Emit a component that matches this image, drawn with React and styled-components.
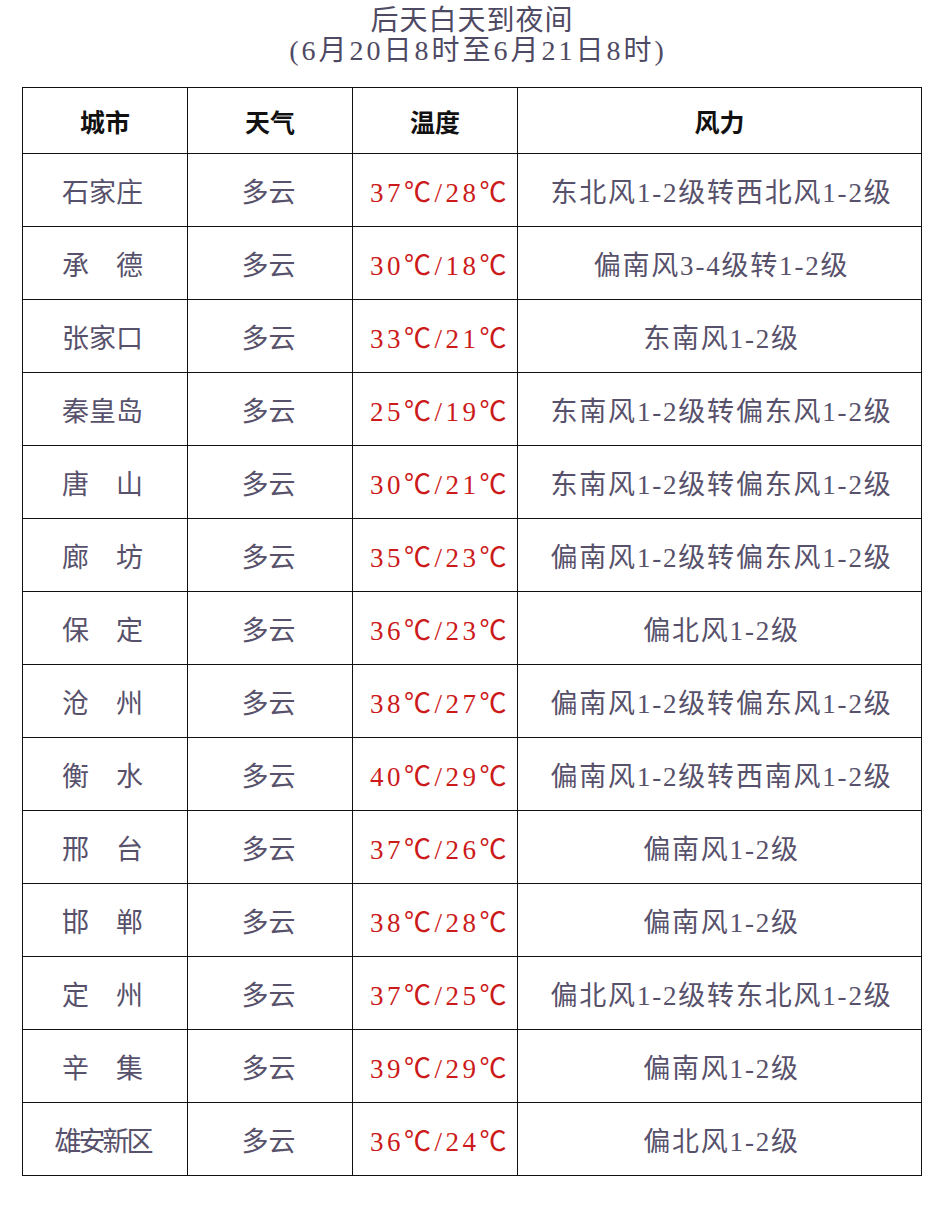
import styled, { createGlobalStyle } from "styled-components";

const rows = [
  ["石家庄", "37℃/28℃", "东北风1-2级转西北风1-2级"],
  ["承　德", "30℃/18℃", "偏南风3-4级转1-2级"],
  ["张家口", "33℃/21℃", "东南风1-2级"],
  ["秦皇岛", "25℃/19℃", "东南风1-2级转偏东风1-2级"],
  ["唐　山", "30℃/21℃", "东南风1-2级转偏东风1-2级"],
  ["廊　坊", "35℃/23℃", "偏南风1-2级转偏东风1-2级"],
  ["保　定", "36℃/23℃", "偏北风1-2级"],
  ["沧　州", "38℃/27℃", "偏南风1-2级转偏东风1-2级"],
  ["衡　水", "40℃/29℃", "偏南风1-2级转西南风1-2级"],
  ["邢　台", "37℃/26℃", "偏南风1-2级"],
  ["邯　郸", "38℃/28℃", "偏南风1-2级"],
  ["定　州", "37℃/25℃", "偏北风1-2级转东北风1-2级"],
  ["辛　集", "39℃/29℃", "偏南风1-2级"],
  ["雄安新区", "36℃/24℃", "偏北风1-2级"],
];

const Global = createGlobalStyle`
  body {
    margin: 0;
    background: #fff;
    font-family: "Liberation Serif", "Noto Sans CJK SC", serif;
  }
`;

const Page = styled.div`
  width: 942px;
  padding: 6px 0 0 22px;
  box-sizing: border-box;
`;

const Title = styled.div`
  width: 900px;
  text-align: center;
  color: #4f4a63;
  font-size: 28px;
  line-height: 30px;
  margin-bottom: 21px;
`;

const TitleLine = styled.div`
  letter-spacing: ${(p) => p.$spacing}px;
  padding-left: ${(p) => p.$shift || 0}px;
`;

const Table = styled.table`
  width: 900px;
  border-collapse: collapse;
  table-layout: fixed;
`;

const Cell = styled.td`
  border: 1.5px solid #111;
  text-align: center;
  padding: 0 ${(p) => (p.$shift < 0 ? -p.$shift : 0)}px 0 ${(p) => (p.$shift > 0 ? p.$shift : 0)}px;
  height: ${(p) => (p.$head ? 65 : 72)}px;
  font-size: ${(p) => (p.$head ? 25 : 27)}px;
  color: ${(p) => (p.$head ? "#111" : p.$red ? "#cc1a1a" : "#57516b")};
  font-weight: ${(p) => (p.$head ? 600 : 400)};
  letter-spacing: ${(p) => p.$spacing || 0}px;
  white-space: nowrap;
`;

export default function App() {
  return (
    <Page>
      <Global />
      <Title>
        <TitleLine $spacing={1}>后天白天到夜间</TitleLine>
        <TitleLine $spacing={3} $shift={12}>(6月20日8时至6月21日8时)</TitleLine>
      </Title>
      <Table>
        <colgroup>
          <col style={{ width: 165 }} />
          <col style={{ width: 165 }} />
          <col style={{ width: 165 }} />
          <col />
        </colgroup>
        <thead>
          <tr>
            <Cell as="th" $head>城市</Cell>
            <Cell as="th" $head>天气</Cell>
            <Cell as="th" $head>温度</Cell>
            <Cell as="th" $head>风力</Cell>
          </tr>
        </thead>
        <tbody>
          {rows.map(([city, temp, wind]) => (
            <tr key={city}>
              <Cell $shift={-5} $spacing={city.length > 3 ? -3 : 0}>{city}</Cell>
              <Cell $shift={-3}>多云</Cell>
              <Cell $red $shift={10} $spacing={3.5}>{temp}</Cell>
              <Cell $shift={4} $spacing={1.8}>{wind}</Cell>
            </tr>
          ))}
        </tbody>
      </Table>
    </Page>
  );
}
